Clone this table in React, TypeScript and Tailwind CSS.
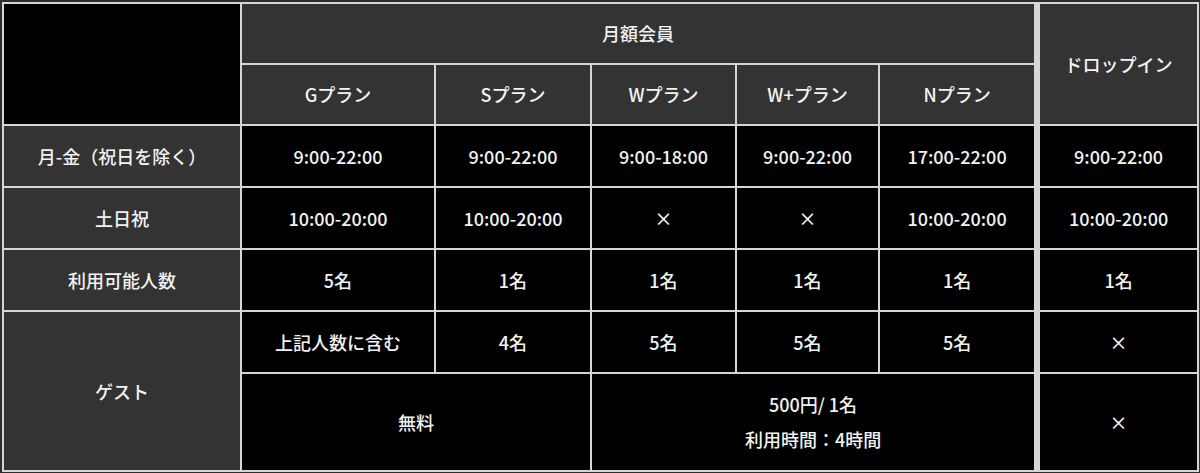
import React from 'react';

// Plan comparison table: monthly members vs drop-in

const line = 'border-2 border-[#d6d6d6]';
const head = `${line} bg-[#333333]`;
const body = `${line} bg-black`;
// drop-in column is separated by a double rule
const drop = 'border-l-[6px] border-l-double';

const plans = ['Gプラン', 'Sプラン', 'Wプラン', 'W+プラン', 'Nプラン'];

const rows: { label: string; cells: string[]; dropIn: string }[] = [
  {
    label: '月-金（祝日を除く）',
    cells: ['9:00-22:00', '9:00-22:00', '9:00-18:00', '9:00-22:00', '17:00-22:00'],
    dropIn: '9:00-22:00',
  },
  {
    label: '土日祝',
    cells: ['10:00-20:00', '10:00-20:00', '×', '×', '10:00-20:00'],
    dropIn: '10:00-20:00',
  },
  {
    label: '利用可能人数',
    cells: ['5名', '1名', '1名', '1名', '1名'],
    dropIn: '1名',
  },
];

export default function App() {
  return (
    <div
      className="min-h-[473px] bg-[#2e2e2e] pt-[2px] pl-[2px] text-[18px] font-medium text-[#f2f2f2]"
      style={{ fontFamily: '"Noto Sans CJK JP", "Noto Sans", sans-serif' }}
    >
      <table className="w-[1197px] table-fixed border-collapse text-center">
        <colgroup>
          <col className="w-[238px]" />
          <col className="w-[194px]" />
          <col className="w-[156px]" />
          <col className="w-[145px]" />
          <col className="w-[143px]" />
          <col className="w-[158px]" />
          <col className="w-[161px]" />
        </colgroup>
        <thead>
          <tr className="h-[61px]">
            <th rowSpan={2} className={`${body} font-medium`} />
            <th colSpan={5} className={`${head} font-medium`}>
              月額会員
            </th>
            <th rowSpan={2} className={`${head} ${drop} font-medium`}>
              ドロップイン
            </th>
          </tr>
          <tr className="h-[61px]">
            {plans.map((p) => (
              <th key={p} className={`${head} font-medium`}>
                {p}
              </th>
            ))}
          </tr>
        </thead>
        <tbody>
          {rows.map((r) => (
            <tr key={r.label} className="h-[62px]">
              <th className={`${head} font-medium`}>{r.label}</th>
              {r.cells.map((c, i) => (
                <td key={i} className={body}>
                  {c}
                </td>
              ))}
              <td className={`${body} ${drop}`}>{r.dropIn}</td>
            </tr>
          ))}
          <tr className="h-[62px]">
            <th rowSpan={2} className={`${head} font-medium`}>
              ゲスト
            </th>
            <td className={body}>上記人数に含む</td>
            <td className={body}>4名</td>
            <td className={body}>5名</td>
            <td className={body}>5名</td>
            <td className={body}>5名</td>
            <td className={`${body} ${drop}`}>×</td>
          </tr>
          <tr className="h-[98px]">
            <td colSpan={2} className={body}>
              無料
            </td>
            <td colSpan={3} className={`${body} leading-[35px]`}>
              <div>500円/ 1名</div>
              <div>利用時間：4時間</div>
            </td>
            <td className={`${body} ${drop}`}>×</td>
          </tr>
        </tbody>
      </table>
    </div>
  );
}
